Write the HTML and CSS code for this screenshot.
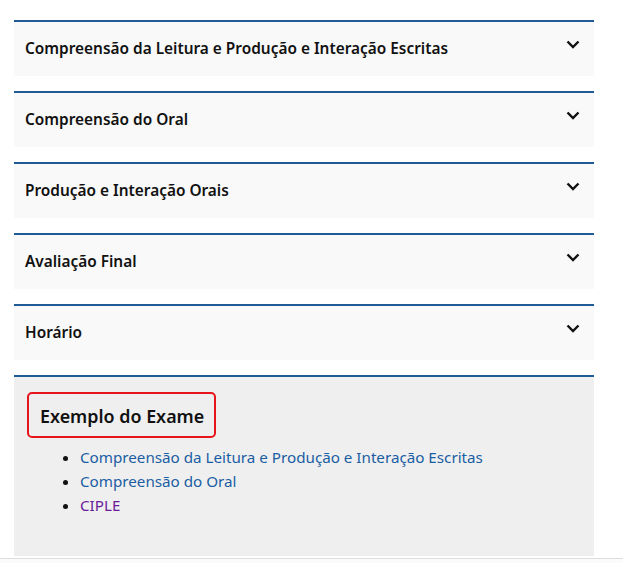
FILE: index.html
```html
<!DOCTYPE html>
<html lang="pt">
<head>
<meta charset="utf-8">
<link rel="stylesheet" href="styles.css">
</head>
<body>
<div class="page">
  <div class="accordion">
    <div class="item"><span class="title">Compreensão da Leitura e Produção e Interação Escritas</span><svg class="chev" viewBox="0 0 14 9" width="14" height="9"><path d="M1.5 1.5 L7 7 L12.5 1.5" fill="none" stroke="#111" stroke-width="2.4"/></svg></div>
    <div class="item"><span class="title">Compreensão do Oral</span><svg class="chev" viewBox="0 0 14 9" width="14" height="9"><path d="M1.5 1.5 L7 7 L12.5 1.5" fill="none" stroke="#111" stroke-width="2.4"/></svg></div>
    <div class="item"><span class="title">Produção e Interação Orais</span><svg class="chev" viewBox="0 0 14 9" width="14" height="9"><path d="M1.5 1.5 L7 7 L12.5 1.5" fill="none" stroke="#111" stroke-width="2.4"/></svg></div>
    <div class="item"><span class="title">Avaliação Final</span><svg class="chev" viewBox="0 0 14 9" width="14" height="9"><path d="M1.5 1.5 L7 7 L12.5 1.5" fill="none" stroke="#111" stroke-width="2.4"/></svg></div>
    <div class="item"><span class="title">Horário</span><svg class="chev" viewBox="0 0 14 9" width="14" height="9"><path d="M1.5 1.5 L7 7 L12.5 1.5" fill="none" stroke="#111" stroke-width="2.4"/></svg></div>
    <div class="exam">
      <h3 class="exam-title">Exemplo do Exame</h3>
      <ul class="links">
        <li><a href="#" class="link">Compreensão da Leitura e Produção e Interação Escritas</a></li>
        <li><a href="#" class="link">Compreensão do Oral</a></li>
        <li><a href="#" class="link visited">CIPLE</a></li>
      </ul>
    </div>
  </div>
  <div class="bottom-line"></div>
</div>
</body>
</html>
```
FILE: styles.css
```css
html, body {
  margin: 0;
  padding: 0;
  background: #fff;
}
body {
  font-family: "Noto Sans", "Open Sans", sans-serif;
  color: #111;
}
.page {
  width: 623px;
  height: 563px;
  overflow: hidden;
  padding-top: 20px;
  box-sizing: border-box;
}
.accordion {
  margin-left: 14px;
  width: 580px;
  display: flex;
  flex-direction: column;
  gap: 15px;
}
.item {
  border-top: 2px solid #1f5c97;
  background: #f9f9f9;
  height: 54px;
  display: flex;
  align-items: center;
  justify-content: space-between;
  padding: 0 14px 0 11px;
}
.title {
  font-size: 15.4px;
  font-weight: 600;
  margin-top: -1px;
}
.chev {
  margin-top: -10px;
}
.exam {
  border-top: 2px solid #1f5c97;
  background: #efefef;
  height: 181px;
  padding: 15px 13px 0;
  box-sizing: border-box;
}
.exam-title {
  display: inline-block;
  margin: 0;
  border: 2px solid #e8141b;
  border-radius: 5px;
  padding: 12px 10px 10px 11px;
  font-size: 17.9px;
  font-weight: 600;
  line-height: 20px;
}
.links {
  margin: 7px 0 0;
  padding-left: 53px;
  font-size: 15.2px;
  line-height: 24px;
}
.link {
  color: #1a5ea3;
  text-decoration: none;
}
.link.visited {
  color: #6a1b9a;
}
.bottom-line {
  margin-top: 2px;
  height: 6px;
  border-top: 1px solid #ddd;
  background: #fbfbfb;
}
```
